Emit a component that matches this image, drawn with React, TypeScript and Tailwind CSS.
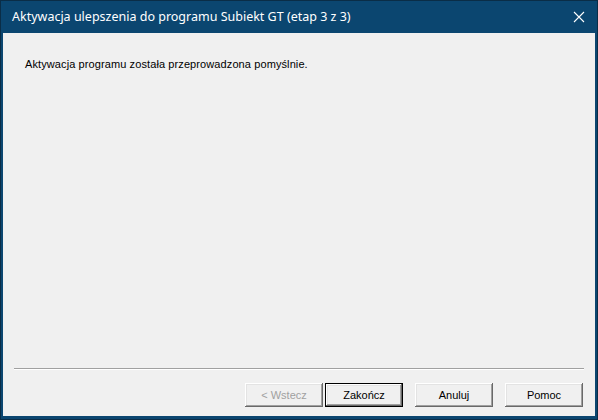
import React from "react";

const btnBase =
  "w-[78px] h-[24px] bg-[#f0f0f0] text-[11px] flex items-center justify-center shadow-[inset_-1px_-1px_#696969,inset_1px_1px_#ffffff,inset_-2px_-2px_#a0a0a0,inset_2px_2px_#e3e3e3]";

function CloseIcon() {
  return (
    <svg width="12" height="12" viewBox="0 0 12 12">
      <path d="M1 1L11 11M11 1L1 11" stroke="#ffffff" strokeWidth="1.1" fill="none" />
    </svg>
  );
}

export default function App() {
  return (
    <div
      className="w-[598px] h-[420px] border border-[#0a2d47] bg-[#0b4670] flex flex-col px-[2px] pb-[3px]"
      style={{ fontFamily: '"Liberation Sans", Arial, sans-serif' }}
    >
      {/* title bar */}
      <div className="h-[32px] flex items-center justify-between pl-[9px] pr-[10px]">
        <span
          className="text-[12.5px] text-white"
          style={{ fontFamily: '"Noto Sans", "Open Sans", sans-serif' }}
        >
          Aktywacja ulepszenia do programu Subiekt GT (etap 3 z 3)
        </span>
        <CloseIcon />
      </div>

      {/* body */}
      <div className="flex-1 bg-[#f0f0f0] flex flex-col">
        <div className="pt-[25px] pl-[22px] text-[11px] leading-[13px] tracking-[0.1px] text-black">
          Aktywacja programu została przeprowadzona pomyślnie.
        </div>

        <div className="flex-1" />

        <div className="mx-[11px] border-t border-[#a0a0a0] border-b border-b-white" />

        <div className="flex justify-end items-center pr-[12px] mt-[13px] mb-[9px]">
          <div className={btnBase + " text-[#a0a0a0]"}>&lt; Wstecz</div>
          <div className="ml-[2px] w-[78px] h-[24px] bg-[#f0f0f0] text-[11px] text-black flex items-center justify-center border border-[#000] shadow-[inset_-1px_-1px_#696969,inset_1px_1px_#ffffff,inset_-2px_-2px_#a0a0a0,inset_2px_2px_#e3e3e3]">
            Zakończ
          </div>
          <div className={btnBase + " text-black ml-[12px]"}>Anuluj</div>
          <div className={btnBase + " text-black ml-[12px]"}>Pomoc</div>
        </div>
      </div>
    </div>
  );
}
